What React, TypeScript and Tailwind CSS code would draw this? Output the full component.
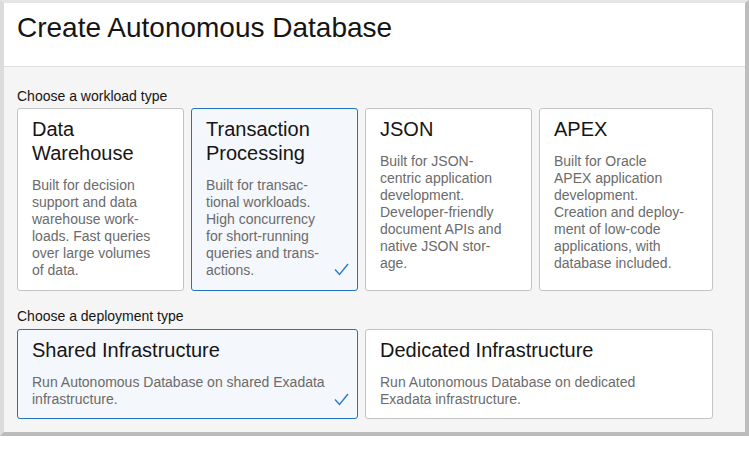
import React from "react";

type Option = {
  title: string[];
  lines: string[];
  selected?: boolean;
  span?: string;
  checkPos?: string;
};

const workloads: Option[] = [
  {
    title: ["Data", "Warehouse"],
    lines: [
      "Built for decision",
      "support and data",
      "warehouse work-",
      "loads. Fast queries",
      "over large volumes",
      "of data.",
    ],
  },
  {
    title: ["Transaction", "Processing"],
    lines: [
      "Built for transac-",
      "tional workloads.",
      "High concurrency",
      "for short-running",
      "queries and trans-",
      "actions.",
    ],
    selected: true,
    checkPos: "bottom-[14px]",
  },
  {
    title: ["JSON"],
    lines: [
      "Built for JSON-",
      "centric application",
      "development.",
      "Developer-friendly",
      "document APIs and",
      "native JSON stor-",
      "age.",
    ],
  },
  {
    title: ["APEX"],
    lines: [
      "Built for Oracle",
      "APEX application",
      "development.",
      "Creation and deploy-",
      "ment of low-code",
      "applications, with",
      "database included.",
    ],
  },
];

const deployments: Option[] = [
  {
    title: ["Shared Infrastructure"],
    lines: ["Run Autonomous Database on shared Exadata", "infrastructure."],
    selected: true,
    span: "col-span-2",
    checkPos: "bottom-[12px]",
  },
  {
    title: ["Dedicated Infrastructure"],
    lines: ["Run Autonomous Database on dedicated", "Exadata infrastructure."],
    span: "col-span-2",
  },
];

const Check = ({ pos }: { pos?: string }) => (
  <svg
    className={`absolute right-[8px] ${pos}`}
    width="15"
    height="13"
    viewBox="0 0 15 13"
    fill="none"
  >
    <polyline
      points="1,6.5 5.5,11.5 14,1"
      stroke="#2a7bd0"
      strokeWidth="1.4"
      fill="none"
    />
  </svg>
);

const OptionCard = ({ opt, pb }: { opt: Option; pb: string }) => (
  <div
    className={`relative rounded-[3px] border pt-[8px] pl-[14px] pr-[6px] ${pb} ${
      opt.span ?? ""
    } ${
      opt.selected
        ? "border-[#2272c6] bg-[#f4f7fb]"
        : "border-[#c4c4c4] bg-white"
    }`}
  >
    <h3 className="text-[20px] leading-[24px] text-[#161513]">
      {opt.title.map((t, i) => (
        <div key={i}>{t}</div>
      ))}
    </h3>
    <p className="mt-[12px] text-[14px] leading-[17px] text-[#6b6b6b]">
      {opt.lines.map((l, i) => (
        <React.Fragment key={i}>
          {l}
          {i < opt.lines.length - 1 && <br />}
        </React.Fragment>
      ))}
    </p>
    {opt.selected && <Check pos={opt.checkPos} />}
  </div>
);

const App = () => {
  return (
    <div className="w-[749px] h-[466px] bg-white font-['Liberation_Sans',Arial,sans-serif]">
      <div className="border-t-[3px] border-l-4 border-r-4 border-b-4 border-t-[#e6e6e6] border-l-[#dcdcdc] border-r-[#bdbdbd] border-b-[#bbbbbb]">
        <div className="h-[64px] bg-white pt-[9px] pl-[13px] border-b border-[#dfdfdf]">
          <h1 className="text-[28px] leading-[32px] text-[#161513]">
            Create Autonomous Database
          </h1>
        </div>
        <div className="h-[365px] bg-[#f5f5f5] pt-[21px] pl-[13px]">
          <div className="text-[14px] leading-[17px] text-[#161513] mb-[3px]">
            Choose a workload type
          </div>
          <div className="grid grid-cols-[167px_167px_167px_174px] gap-[7px]">
            {workloads.map((w) => (
              <OptionCard key={w.title.join(" ")} opt={w} pb="pb-[11px]" />
            ))}
          </div>
          <div className="mt-[17px] text-[14px] leading-[17px] text-[#161513] mb-[4px]">
            Choose a deployment type
          </div>
          <div className="grid grid-cols-[167px_167px_167px_174px] gap-[7px]">
            {deployments.map((d) => (
              <OptionCard key={d.title.join(" ")} opt={d} pb="pb-[10px]" />
            ))}
          </div>
        </div>
      </div>
    </div>
  );
};

export default App;
